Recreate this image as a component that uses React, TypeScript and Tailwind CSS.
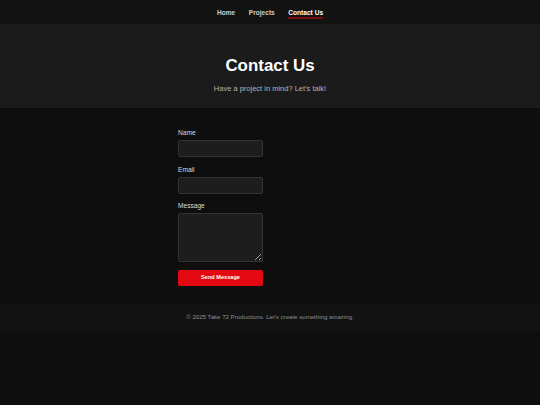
import React from "react";

const navLinks = [
  { label: "Home", active: false },
  { label: "Projects", active: false },
  { label: "Contact Us", active: true },
];

const Field = ({ label, children }: { label: string; children: React.ReactNode }) => (
  <div className="mb-[7.5px] flex flex-col">
    <label className="mb-[3px] text-[6.6px] leading-[9px] text-[#dcdcdc]">{label}</label>
    {children}
  </div>
);

export default function App() {
  return (
    <div
      className="min-h-[405px] bg-[#0e0e0e] text-white"
      style={{ fontFamily: '"Liberation Sans", Arial, sans-serif' }}
    >
      <nav className="flex h-[24px] items-center justify-center gap-[13.5px] bg-[#121212]">
        {navLinks.map((link) => (
          <a
            key={link.label}
            href="#"
            className={`relative text-[6.6px] font-bold leading-[9px] ${
              link.active ? "text-white" : "text-[#cfcfcf]"
            }`}
          >
            {link.label}
            {link.active && (
              <span className="absolute left-0 right-0 top-[9.5px] h-[1.5px] bg-[#7a0d12]" />
            )}
          </a>
        ))}
      </nav>

      <header className="flex h-[84px] flex-col items-center bg-[#1b1b1b] pt-[31.5px]">
        <h1 className="text-[16.9px] font-bold leading-[19.5px] text-white">Contact Us</h1>
        <p className="mt-[7.5px] text-[7.5px] leading-[11px] text-[#b3b3b3]">
          Have a project in mind? Let's talk!
        </p>
      </header>

      <main className="pb-[18px] pt-[20px]">
        <div className="mx-auto w-[184px]">
          <form className="flex w-[85px] flex-col" onSubmit={(e) => e.preventDefault()}>
            <Field label="Name">
              <input
                type="text"
                className="block h-[17px] rounded-[2px] border border-[#333] bg-[#1d1d1d] px-1 text-[6.6px] text-white outline-none"
              />
            </Field>
            <Field label="Email">
              <input
                type="email"
                className="block h-[17px] rounded-[2px] border border-[#333] bg-[#1d1d1d] px-1 text-[6.6px] text-white outline-none"
              />
            </Field>
            <Field label="Message">
              <textarea className="block h-[49px] rounded-[2px] border border-[#333] bg-[#1d1d1d] px-1 text-[6.6px] text-white outline-none" />
            </Field>
            <button
              type="submit"
              className="h-[16px] rounded-[2px] bg-[#e50914] text-[5.6px] font-bold text-white"
            >
              Send Message
            </button>
          </form>
        </div>
      </main>

      <footer className="flex h-[27px] items-center justify-center bg-[#121212]">
        <p className="text-[6.1px] text-[#8f8f8f]">
          © 2025 Take 72 Productions. Let's create something amazing.
        </p>
      </footer>
    </div>
  );
}
